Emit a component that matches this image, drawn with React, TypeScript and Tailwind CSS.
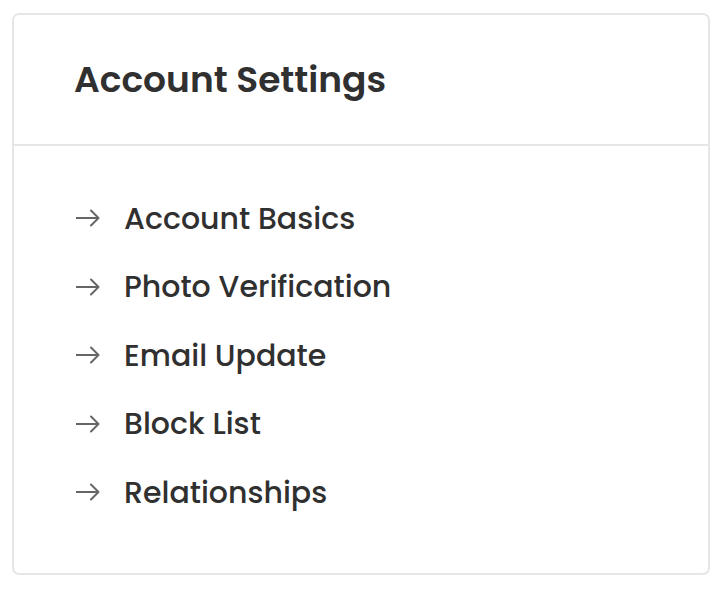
const links = [
  "Account Basics",
  "Photo Verification",
  "Email Update",
  "Block List",
  "Relationships",
];

function Arrow() {
  return (
    <svg width="24" height="18" viewBox="0 0 24 18" fill="none" className="shrink-0 text-[#666]">
      <path d="M0.5 9h22M15 1.5l7.5 7.5-7.5 7.5" stroke="currentColor" strokeWidth="2" strokeLinecap="round" strokeLinejoin="round" />
    </svg>
  );
}

export default function App() {
  return (
    <div className="min-h-[590px] w-[728px] bg-white pl-[12px] pt-[13px] font-['Poppins','Open_Sans',sans-serif] text-[#303030]">
      <div className="flex h-[562px] w-[698px] flex-col rounded-[7px] border-2 border-[#e6e6e6]">
        {/* Header */}
        <div className="flex h-[131px] items-center border-b-2 border-[#e6e6e6] pl-[60px]">
          <h2 className="text-[36px] font-semibold">Account Settings</h2>
        </div>

        {/* Links */}
        <ul className="flex flex-col pl-[62px] pt-[38px]">
          {links.map((label) => (
            <li key={label} className="flex h-[68.5px] items-center gap-[24px]">
              <Arrow />
              <span className="text-[30px] font-medium">{label}</span>
            </li>
          ))}
        </ul>
      </div>
    </div>
  );
}
